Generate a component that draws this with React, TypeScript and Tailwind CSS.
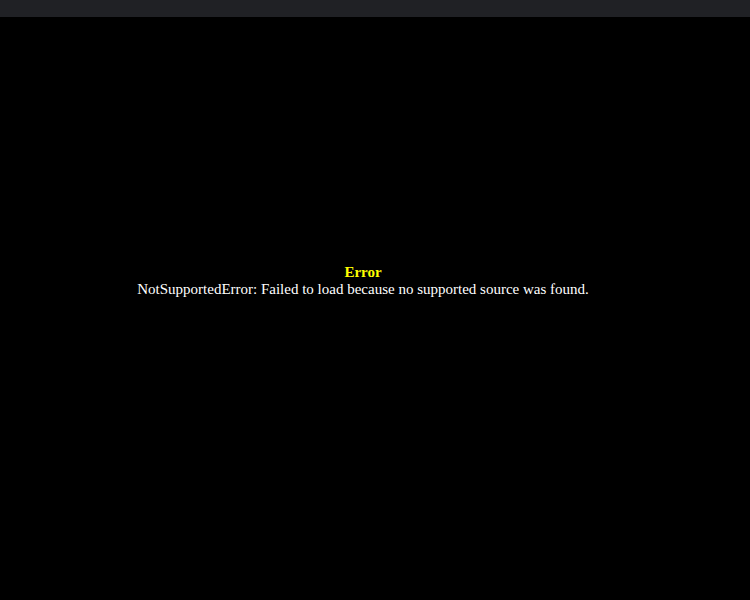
export default function App() {
  return (
    <div className="w-[750px] h-[600px] bg-black flex flex-col overflow-hidden">
      <div className="h-[17px] bg-[#202125] shrink-0" />
      <div className="flex-1 flex flex-col items-center justify-center w-[726px] pb-[55px] text-center font-['Liberation_Serif',serif] text-[15px] leading-[17px]">
        <div className="text-[#ffff00] font-bold">Error</div>
        <div className="text-white">NotSupportedError: Failed to load because no supported source was found.</div>
      </div>
    </div>
  );
}
